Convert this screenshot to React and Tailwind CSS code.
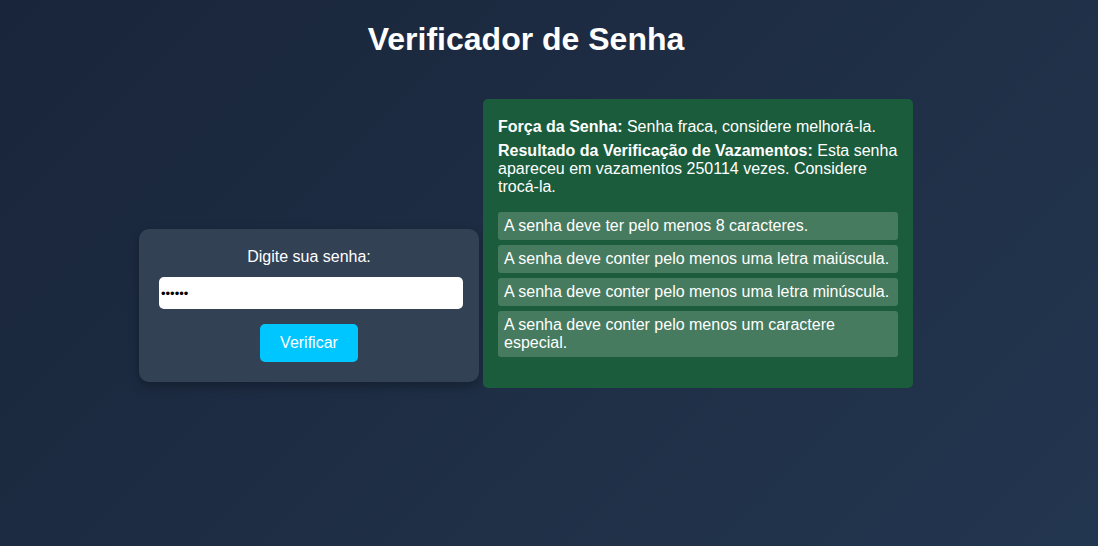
const REQUISITOS = [
  'A senha deve ter pelo menos 8 caracteres.',
  'A senha deve conter pelo menos uma letra maiúscula.',
  'A senha deve conter pelo menos uma letra minúscula.',
  'A senha deve conter pelo menos um caractere especial.',
]

export default function App() {
  return (
    <div
      className="w-screen h-screen overflow-hidden bg-[linear-gradient(135deg,#19253a,#23364f)] text-white"
      style={{ fontFamily: "'Liberation Sans', Arial, sans-serif" }}
    >
      <div className="w-[1052px] flex flex-col items-center">
        <h1 className="mt-[21px] text-[32px] leading-[37px] font-bold">Verificador de Senha</h1>

        <div className="mt-[41px] flex items-start gap-[4px]">
          {/* Left: input card */}
          <div className="mt-[130px] w-[340px] h-[153px] rounded-[10px] bg-[#334155] shadow-[0_4px_12px_rgba(0,0,0,0.3)] flex flex-col items-center pt-[19px]">
            <label className="text-[16px] leading-[18px]">Digite sua senha:</label>
            <input
              type="password"
              defaultValue="123456"
              className="mt-[11px] ml-[4px] w-[304px] h-[32px] rounded-[5px] bg-white text-black px-[2px] text-[13px] outline-none"
            />
            <button className="mt-[15px] w-[98px] h-[38px] rounded-[5px] bg-[#00c6ff] text-[16px] text-white">
              Verificar
            </button>
          </div>

          {/* Right: results card */}
          <div className="w-[430px] h-[289px] rounded-[5px] bg-[#1b5c3c] px-[15px] pt-[19px] text-[16px] leading-[18px]">
            <p>
              <strong>Força da Senha:</strong> Senha fraca, considere melhorá-la.
            </p>
            <p className="mt-[6px]">
              <strong>Resultado da Verificação de Vazamentos:</strong> Esta senha apareceu em vazamentos 250114 vezes. Considere trocá-la.
            </p>
            <ul className="mt-[16px] flex flex-col gap-[5px]">
              {REQUISITOS.map((r) => (
                <li key={r} className="rounded-[3px] bg-[#477b60] px-[6px] py-[5px]">
                  {r}
                </li>
              ))}
            </ul>
          </div>
        </div>
      </div>
    </div>
  )
}
